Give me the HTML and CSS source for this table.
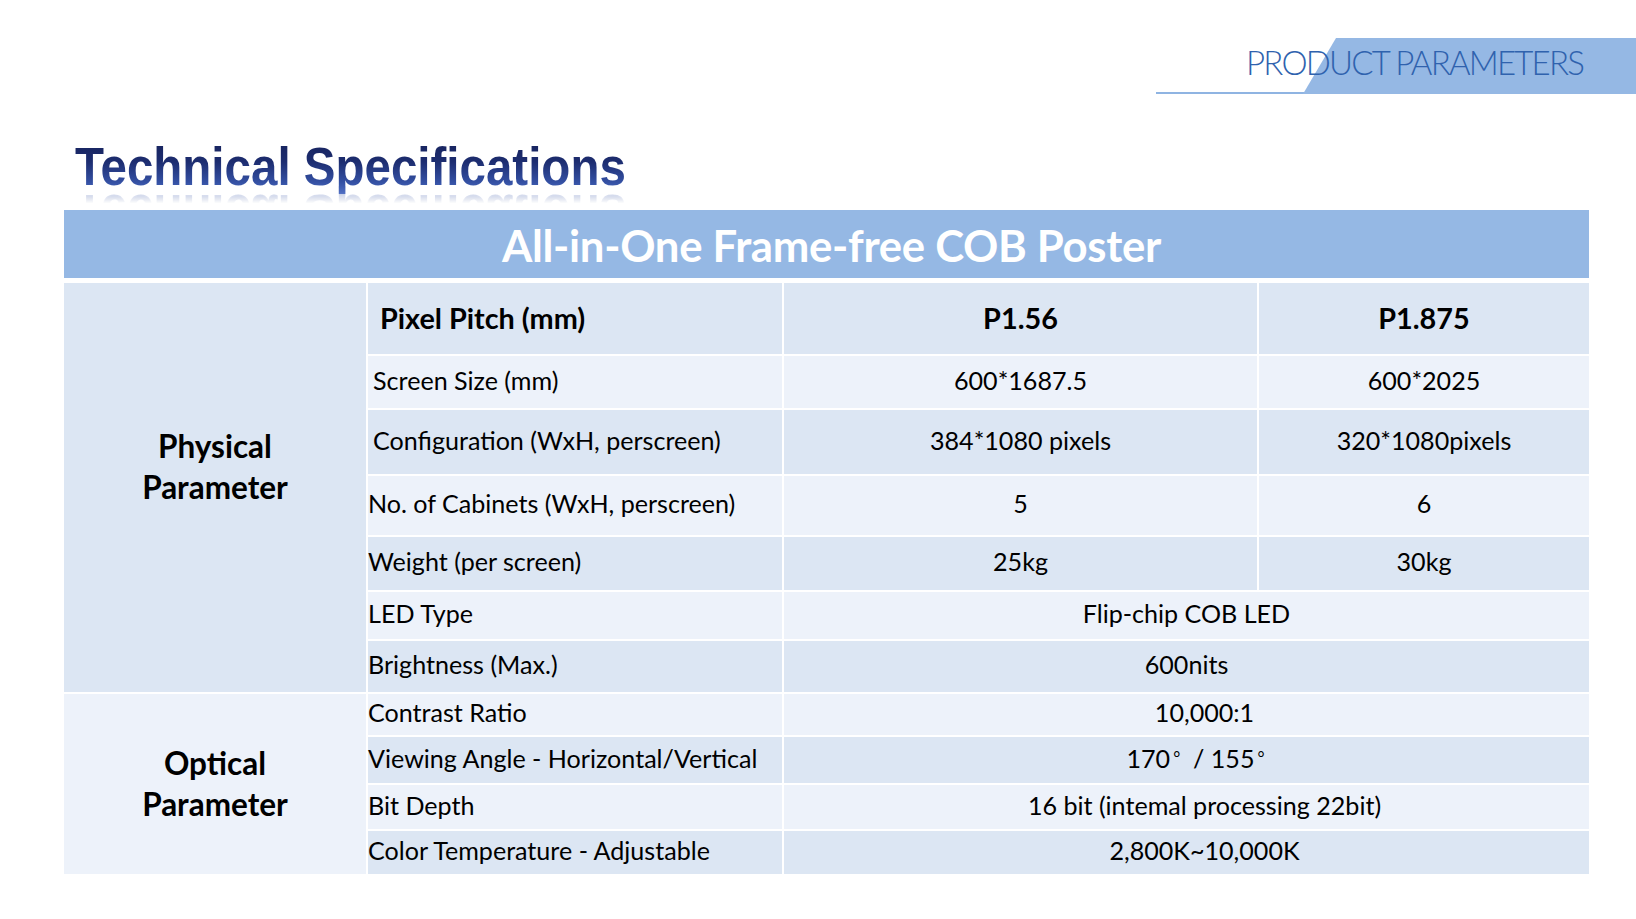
FILE: index.html
```html
<!DOCTYPE html>
<html lang="en">
<head>
<meta charset="utf-8">
<title>Technical Specifications</title>
<link rel="stylesheet" href="styles.css">
</head>
<body>
<header class="top">
  <svg class="top-deco" width="1636" height="96" viewBox="0 0 1636 96" aria-hidden="true">
    <rect x="1156" y="92" width="150" height="2" fill="#8fb4e2"/>
    <polygon points="1303,94 1336,38 1636,38 1636,94" fill="#95b8e4"/>
  </svg>
  <div class="top-title">PRODUCT PARAMETERS</div>
</header>

<h1 class="page-title">Technical Specifications</h1>

<section class="spec">
  <div class="band">All-in-One Frame-free COB Poster</div>
  <div class="grid">
    <div class="group dark phys">Physical<br>Parameter</div>
    <div class="cell dark label head">Pixel Pitch (mm)</div>
    <div class="cell dark val head">P1.56</div>
    <div class="cell dark val head">P1.875</div>

    <div class="cell light label pad">Screen Size (mm)</div>
    <div class="cell light val">600*1687.5</div>
    <div class="cell light val">600*2025</div>

    <div class="cell dark label pad">Configuration (WxH, perscreen)</div>
    <div class="cell dark val">384*1080 pixels</div>
    <div class="cell dark val">320*1080pixels</div>

    <div class="cell light label">No. of Cabinets (WxH, perscreen)</div>
    <div class="cell light val">5</div>
    <div class="cell light val">6</div>

    <div class="cell dark label">Weight (per screen)</div>
    <div class="cell dark val">25kg</div>
    <div class="cell dark val">30kg</div>

    <div class="cell light label">LED Type</div>
    <div class="cell light val span">Flip-chip COB LED</div>

    <div class="cell dark label">Brightness (Max.)</div>
    <div class="cell dark val span">600nits</div>

    <div class="group light opt">Optical<br>Parameter</div>
    <div class="cell light label">Contrast Ratio</div>
    <div class="cell light val span shift">10,000:1</div>

    <div class="cell dark label">Viewing Angle - Horizontal/Vertical</div>
    <div class="cell dark val span shift-sm">170<span class="deg">°</span>&nbsp; / 155<span class="deg">°</span></div>

    <div class="cell light label">Bit Depth</div>
    <div class="cell light val span shift">16 bit (intemal processing 22bit)</div>

    <div class="cell dark label">Color Temperature - Adjustable</div>
    <div class="cell dark val span shift">2,800K~10,000K</div>
  </div>
</section>
</body>
</html>
```

FILE: styles.css
```css
html, body {
  margin: 0;
  padding: 0;
  background: #ffffff;
}

body {
  width: 1636px;
  height: 919px;
  overflow: hidden;
  font-family: "Lato", "Liberation Sans", sans-serif;
  color: #000;
}

/* top banner */
.top {
  position: relative;
  height: 96px;
  display: flex;
  justify-content: flex-end;
  align-items: center;
  padding-top: 28px;
  box-sizing: border-box;
}

.top-deco {
  position: absolute;
  left: 0;
  top: 0;
}

.top-title {
  position: relative;
  font-family: "Lato", "Open Sans", sans-serif;
  font-weight: 300;
  font-size: 33px;
  line-height: 40px;
  color: #2f62ae;
  padding-right: 53px;
  letter-spacing: -1.8px;
}

/* title */
.page-title {
  margin: 49px 0 0 0;
  padding-left: 75px;
  height: 48px;
  font-family: "Liberation Sans", Arial, sans-serif;
  font-weight: bold;
  font-size: 47.5px;
  line-height: 48px;
  width: max-content;
  background: linear-gradient(to bottom, #17235c 0%, #1d2d70 40%, #3450a3 78%, #5170c4 100%);
  -webkit-background-clip: text;
  background-clip: text;
  color: transparent;
  transform: scaleY(1.12);
  transform-origin: 0 40px;
  -webkit-box-reflect: below -7px linear-gradient(to bottom, transparent 68%, rgba(255, 255, 255, 0.5) 100%);
}

/* spec table */
.spec {
  margin: 17px 0 0 64px;
  width: 1525px;
}

.band {
  height: 68px;
  background: #95b8e4;
  color: #fff;
  font-weight: bold;
  font-size: 43.7px;
  line-height: 68px;
  text-align: center;
  margin-bottom: 5px;
  letter-spacing: -0.3px;
  padding-top: 1px;
  padding-left: 10px;
  box-sizing: border-box;
}

.grid {
  display: grid;
  grid-template-columns: 302px 414px 473px 330px;
  grid-template-rows: 71px 52px 64px 59px 53px 47px 51px 41px 46px 44px 43px;
  gap: 2px;
  background: #fff;
}

.dark { background: #dce6f3; }
.light { background: #edf2fa; }

.cell {
  display: flex;
  align-items: center;
  font-size: 25.1px;
  padding-bottom: 5px;
  box-sizing: border-box;
  white-space: nowrap;
}

.label {
  grid-column: 2;
  justify-content: flex-start;
}

.label.pad { padding-left: 5px; }

.val {
  justify-content: center;
}

.span { grid-column: 3 / 5; }
.shift { padding-left: 36px; }
.shift-sm { padding-left: 18px; }

.head {
  font-weight: bold;
  font-size: 28.8px;
  padding-bottom: 2px;
}

.label.head { padding-left: 12px; }

.group {
  grid-column: 1;
  display: flex;
  align-items: center;
  justify-content: center;
  text-align: center;
  font-weight: bold;
  font-size: 31.5px;
  line-height: 41px;
  box-sizing: border-box;
}

.phys {
  grid-row: 1 / 8;
  padding-bottom: 42px;
}

.opt {
  grid-row: 8 / 12;
}

.deg {
  display: inline-block;
  font-size: 17px;
  vertical-align: 7px;
  margin-left: 3px;
}
```
